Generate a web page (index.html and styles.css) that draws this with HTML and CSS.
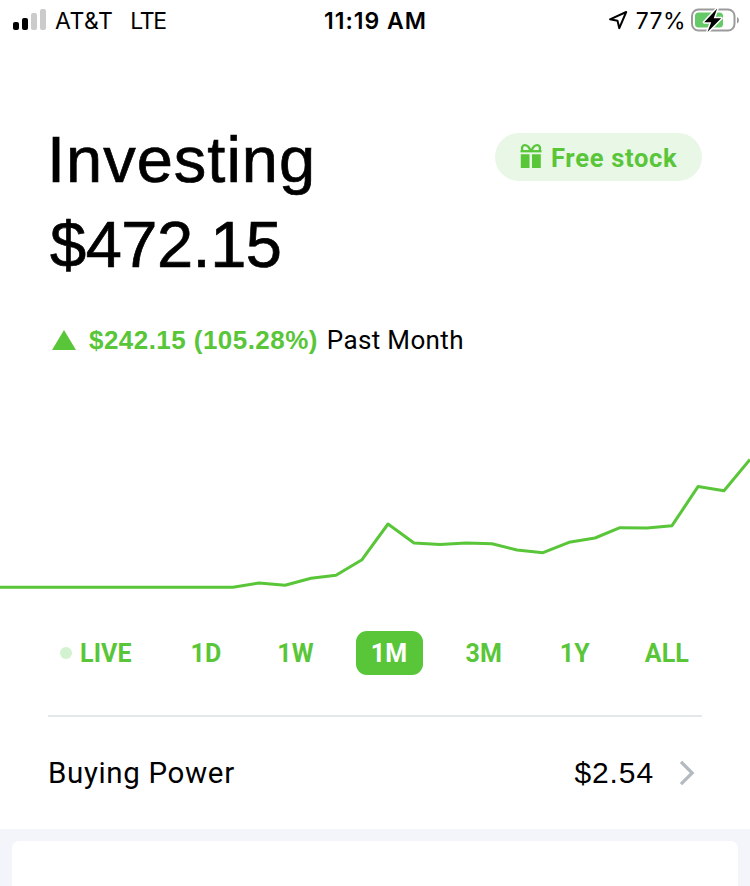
FILE: index.html
```html
<!DOCTYPE html>
<html lang="en">
<head>
<meta charset="utf-8">
<title>Investing</title>
<link rel="stylesheet" href="styles.css">
</head>
<body>
<header class="status">
  <div class="carrier">
    <svg class="signal" width="34" height="22" viewBox="0 0 34 22"><rect x="0" y="13" width="6" height="8" rx="2"/><rect x="9" y="9" width="6" height="12" rx="2"/><g fill="#cbcbcb"><rect x="18" y="4" width="6" height="17" rx="2"/><rect x="27" y="0" width="6" height="21" rx="2"/></g></svg>
    <span class="operator">AT&amp;T</span><span class="network">LTE</span>
  </div>
  <time class="clock">11:19 AM</time>
  <div class="power">
    <svg class="location" width="22" height="20" viewBox="0 0 22 20"><path d="M2 9.3 18.2 2 11.3 18.2 9.5 10.8Z" fill="none" stroke="#000" stroke-width="2" stroke-linejoin="round"/></svg>
    <span class="percent">77%</span>
    <svg class="battery" width="50" height="26" viewBox="0 0 50 26"><rect x="1" y="2.500" width="42.5" height="21" rx="6.5" fill="#fff" stroke="#9b9b9b" stroke-width="2"/><path d="M46 10v6.5q2-1 2-3.3T46 10Z" fill="#9b9b9b"/><rect x="4" y="5.500" width="28" height="15" rx="3.5" fill="#65c967"/><path d="M26.2 1.5 13.2 15.2H20.2L16.5 25 30.2 11.3H22.7Z" fill="#000" stroke="#fff" stroke-width="3" paint-order="stroke" stroke-linejoin="round"/></svg>
  </div>
</header>
<main>
  <section class="summary">
    <div class="heading">
      <h1>Investing</h1>
      <div class="balance">$472.15</div>
    </div>
    <a class="reward">
      <svg width="22" height="26" viewBox="0 0 22 26"><g fill="none" stroke="#59c639" stroke-width="2.3"><path d="M.5 8.2H21.500"/><path d="M10.5 8.2C9.5 4.5 7.5 2.2 4.6 2.2 2.2 2.2 1.2 5.5 2.6 8M11.5 8.2C12.5 4.5 14.500 2.2 17.4 2.2 19.8 2.2 20.8 5.5 19.4 8"/></g><path d="M.8 11.300H9.500V25H.8ZM12 11.300H20.800V25H12Z" fill="#59c639"/></svg>
      <span>Free stock</span>
    </a>
  </section>
  <div class="change">
    <svg width="24" height="20" viewBox="0 0 24 20"><path d="M12 0 24 20H0Z" fill="#59c639"/></svg>
    <strong>$242.15 (105.28%)</strong><span class="period">Past Month</span>
  </div>
  <svg class="chart" width="750" height="160" viewBox="0 440 750 160"><polyline fill="none" stroke="#59c639" stroke-width="3" stroke-linejoin="round" points="0,587.200 233,587.200 259,583 285,585.300 311,578.300 336,575.200 362,559.700 388,524 414,543 440,544.400 466,543 492,543.700 517,550 543,552.700 569,542.300 595,538 620,527.700 647,528 672,525.700 698,486.600 724,490.700 750,459.500"/></svg>
  <nav class="ranges">
    <a class="live"><i class="dot"></i>LIVE</a><a class="day">1D</a><a class="week">1W</a><a class="active">1M</a><a class="quarter">3M</a><a class="year">1Y</a><a class="all">ALL</a>
  </nav>
  <section class="buying">
    <span class="label">Buying Power</span>
    <span class="amount">$2.54</span>
    <svg width="17" height="26" viewBox="0 0 17 26"><path d="M2 1.800 13.200 13 2 24.200" fill="none" stroke="#b3bac0" stroke-width="3.200"/></svg>
  </section>
</main>
<section class="feed"><div class="card"></div></section>
</body>
</html>
```

FILE: styles.css
```css
* { box-sizing: border-box; }
body { margin: 0; width: 750px; height: 886px; overflow: hidden; display: flex; flex-direction: column; background: #fff; color: #000; font-family: "Liberation Sans", Roboto, sans-serif; }
svg { display: block; flex: none; }
.status { height: 42px; display: grid; grid-template-columns: 1fr auto 1fr; align-items: center; padding: 0 9px 2px 13px; font: 23px/38px Inter, sans-serif; }
.status span, .clock { padding-top: 2px; }
.carrier, .power { display: flex; align-items: center; white-space: nowrap; }
.signal { margin-right: 8px; }
.operator { letter-spacing: .5px; }
.network { margin-left: 17px; letter-spacing: -1.4px; }
.clock { font-weight: 600; letter-spacing: 1px; margin-left: -3px; }
.power { justify-content: flex-end; }
.location { margin-right: 6px; }
.percent { margin-right: 5px; letter-spacing: .4px; }
main { height: 787px; }
.summary { height: 276px; padding: 75px 48px 0 50px; display: flex; justify-content: space-between; align-items: flex-start; }
h1, .balance { margin: 0; font-size: 65px; font-weight: 400; line-height: 85px; -webkit-text-stroke: .7px #000; }
h1 { letter-spacing: 1px; margin-left: -3px; }
.balance { letter-spacing: -.5px; margin-left: 0; }
.reward { width: 207px; height: 48px; margin-top: 16px; border-radius: 24px; background: #e9f7e6; display: flex; align-items: center; padding: 0 0 1px 25px; gap: 9px; color: #59c639; font-family: Roboto, sans-serif; font-weight: 700; font-size: 25.5px; letter-spacing: .7px; }
.reward svg { margin-top: -1px; }
.reward span { padding-top: 3px; white-space: nowrap; }
.change { height: 44px; display: flex; align-items: center; padding-left: 52px; font-size: 26px; line-height: 44px; white-space: nowrap; }
.change strong { color: #59c639; margin-left: 13px; letter-spacing: .45px; }
.period { margin-left: 9px; font-family: Roboto, sans-serif; letter-spacing: .35px; }
.chart { margin-top: 78px; }
.ranges { height: 44px; margin-top: 31px; padding: 0 61px 0 60px; display: flex; justify-content: space-between; align-items: center; color: #59c639; font-family: Roboto, sans-serif; font-size: 25px; font-weight: 700; letter-spacing: .1px; }
.live { display: flex; align-items: center; }
.dot { width: 12px; height: 12px; margin-right: 8px; border-radius: 50%; background: #d3f2d0; }
.day { margin-left: 7px; }
.week { margin-left: 4px; }
.active { width: 67px; height: 44px; margin-left: -10px; border-radius: 11px; background: #59c639; color: #fff; line-height: 45px; text-align: center; }
.quarter { margin-left: -9px; }
.year { margin-left: 6px; }
.all { margin-left: 3px; }
.buying { height: 114px; margin: 40px 48px 0; border-top: 2px solid #e3e8eb; display: flex; align-items: center; font-size: 30px; }
.label { font-family: Roboto, sans-serif; font-size: 29.5px; letter-spacing: .65px; }
.amount { margin-left: auto; margin-right: 25px; letter-spacing: .9px; }
.buying svg { margin-right: 6px; }
.feed { flex: 1; background: #f4f5fa; padding: 12px 12px 0; }
.card { height: 60px; border-radius: 7px 7px 0 0; background: #fff; }
```
